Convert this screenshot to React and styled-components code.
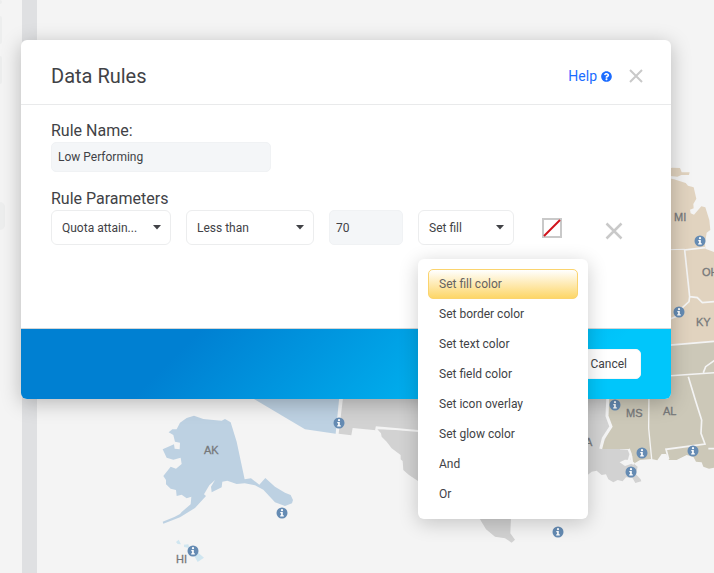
import React, { useState } from "react";
import styled, { createGlobalStyle, css } from "styled-components";

const GlobalStyle = createGlobalStyle`
  *, *::before, *::after { box-sizing: border-box; }
  html, body, #root { height: 100%; }
  body {
    margin: 0;
    overflow: hidden;
    background: #f4f4f4;
    color: #414246;
    font-family: Roboto, "Noto Sans", sans-serif;
    font-size: 12px;
  }
  button, input, select { font: inherit; color: inherit; }
`;

const Page = styled.div`
  position: relative;
  display: flex;
  min-height: 100%;
`;

const Sidebar = styled.aside`
  flex: 0 0 22px;
  display: flex;
  flex-direction: column;
  gap: 12px;
`;

const SideTab = styled.div`
  width: ${(p) => (p.$wide ? 5 : 2)}px;
  height: ${(p) => (p.$short ? 4 : 28)}px;
  margin-top: ${(p) => (p.$wide ? 106 : 0)}px;
  border-radius: 0 5px 5px 0;
  background: #edeeee;
`;

const Splitter = styled.div`
  flex: 0 0 15px;
  background: #dfe0e2;
`;

const Canvas = styled.main`
  flex: 1;
  min-width: 0;
  overflow: hidden;
`;

const MapDrawing = styled.svg`
  display: block;
`;

const StateLabel = styled.text`
  font-family: "Liberation Sans", Arial, sans-serif;
  font-size: 11px;
  fill: #76787a;
  stroke: #76787a;
  stroke-width: 0.3px;
`;

const Overlay = styled.div`
  position: absolute;
  inset: 0;
  padding: 40px 43px 0 21px;
`;

const Dialog = styled.section`
  border-radius: 6px;
  background: #fff;
  box-shadow: 0 4px 20px rgba(0, 0, 0, 0.25);
`;

const Header = styled.header`
  display: flex;
  align-items: center;
  height: 65px;
  padding: 8px 27px 0 30px;
  border-bottom: 1px solid #e9eaeb;
`;

const Title = styled.h1`
  flex: 1;
  margin: 0;
  font-size: 20px;
  font-weight: 400;
  line-height: 28px;
`;

const HelpLink = styled.a`
  display: flex;
  align-items: center;
  gap: 4px;
  margin-right: 16px;
  color: #1b6cff;
  font-size: 14px;
  line-height: 20px;
  text-decoration: none;
`;

const IconButton = styled.button`
  display: flex;
  padding: 0;
  border: 0;
  background: none;
  color: #c9c9c9;
  cursor: pointer;
`;

const Body = styled.div`
  min-height: 224px;
  padding: 15px 30px;
  border-bottom: 1px solid #d3d5d6;
`;

const FieldLabel = styled.label`
  display: block;
  font-size: 16px;
  line-height: 22px;
`;

const Group = styled.fieldset`
  margin: 16px 0 0;
  padding: 0;
  border: 0;
  min-width: 0;
`;

const GroupLabel = styled.legend`
  padding: 0;
  font-size: 16px;
  line-height: 22px;
`;

const TextInput = styled.input`
  display: block;
  width: ${(p) => p.$width}px;
  height: ${(p) => (p.$tall ? 35 : 30)}px;
  padding: 0 6px;
  border: 1px solid #f0f2f4;
  border-radius: 5px;
  background: #f4f6f8;
  outline: none;
`;

const ParamRow = styled.div`
  display: flex;
  align-items: center;
  gap: 15px;
`;

const SelectBox = styled.div`
  position: relative;
  display: grid;
  width: ${(p) => p.$width}px;
`;

const control = css`
  grid-area: 1 / 1;
  width: 100%;
  height: 35px;
  padding: 0 24px 0 10px;
  border: 1px solid #ecedee;
  border-radius: 6px;
  background: #fff;
  text-align: left;
  appearance: none;
  outline: none;
`;

const Select = styled.select`
  ${control}
`;

const SelectTrigger = styled.button`
  ${control}
`;

const Caret = styled.svg`
  grid-area: 1 / 1;
  justify-self: end;
  align-self: center;
  z-index: 1;
  margin-right: 10px;
  pointer-events: none;
`;

const Menu = styled.ul`
  position: absolute;
  top: calc(100% + 14px);
  left: 0;
  z-index: 2;
  width: 170px;
  margin: 0;
  padding: 10px;
  border-radius: 6px;
  background: #fff;
  box-shadow: 0 4px 20px rgba(0, 0, 0, 0.2);
  list-style: none;
`;

const MenuItem = styled.button`
  display: block;
  width: 100%;
  height: 30px;
  padding: 0 10px;
  border: 1px solid ${(p) => (p.$active ? "#fbd46e" : "transparent")};
  border-radius: 5px;
  background: ${(p) => (p.$active ? "linear-gradient(#fff, #fdd667)" : "none")};
  color: ${(p) => (p.$active ? "#666361" : "inherit")};
  text-align: left;
  white-space: nowrap;
`;

const Swatch = styled(IconButton)`
  margin-left: 13px;
`;

const RemoveButton = styled(IconButton)`
  margin: 6px 0 0 27px;
`;

const Footer = styled.footer`
  display: flex;
  justify-content: flex-end;
  padding: 20px 30px;
  border-radius: 0 0 6px 6px;
  background: linear-gradient(135deg, #0080d2 0%, #0080d2 25%, #00c6fb 85%);
`;

const CancelButton = styled.button`
  height: 30px;
  padding: 0 13px;
  border: 1px solid #f5f6f7;
  border-radius: 5px;
  background: #fff;
`;

const actions = [
  "Set fill color",
  "Set border color",
  "Set text color",
  "Set field color",
  "Set icon overlay",
  "Set glow color",
  "And",
  "Or",
];

const labels = [
  ["AK", 204, 454],
  ["HI", 176, 563],
  ["MS", 626, 417],
  ["AL", 663, 415],
  ["LA", 579, 446],
  ["MI", 674, 221],
  ["OH", 702, 276],
  ["KY", 696, 326],
];

const infoPoints = [
  [282, 513], [193, 551], [339, 423], [558, 532], [615, 405],
  [642, 453], [631, 472], [693, 451], [679, 312], [700, 241],
];

function Info({ x, y }) {
  return (
    <g transform={`translate(${x} ${y})`}>
      <circle r="5.5" fill="#658bb3" />
      <circle cy="-2.8" r="1.1" fill="#fff" />
      <path d="M-1.7-1H.8V2.3H1.8V3.5H-1.8V2.3H-.9V.2H-1.7Z" fill="#fff" />
    </g>
  );
}

function StateMap() {
  return (
    <MapDrawing width="677" height="573" viewBox="37 0 677 573" role="img" aria-label="Map of states">
      <g transform="translate(140 390) scale(.3333)">
        <path fill="#bdd1e2" d="M162 77L190 87 220 90 245 92 255 87 272 97 290 155 314 268 333 265 358 284 376 264 405 290 435 308 452 315 459 330 456 340 435 348 405 337 370 299 345 286 314 280 290 282 262 272 247 275 245 292 215 307 213 290 225 270 208 286 192 313 198 318 165 354 120 382 70 401 68 395 103 381 120 372 125 366 152 343 154 320 140 325 125 314 110 318 108 300 92 296 78 283 78 270 70 258 92 230 108 236 125 222 122 203 100 209 80 203 68 178 102 163 104 176 119 178 120 158 105 155 100 135 86 127 97 118 110 118 120 98 140 84Z" />
        <path fill="#d0e6f0" d="M108 456L116 449 123 463 113 462ZM132 464L145 463 148 474 132 471ZM146 474L159 471 163 480 151 483ZM173 487L192 503 173 516 164 500Z" />
      </g>
      <g transform="translate(240 390) scale(.3333)">
        <path fill="#bdd1e2" d="M0 0L42 27 195 118 287 131 300 0Z" />
        <path fill="#d2d2d2" d="M312 0L296 131 334 136 338 114 408 121 410 112 534 122V0Z" />
        <path fill="#d2d2d2" d="M412 118L720 128V290H560L534 273 507 255 490 240 488 213 482 208 482 195 455 175 440 155 425 140 423 130Z" />
        <path fill="none" stroke="#f4f4f4" strokeWidth="6" d="M408 122L410 112 534 123 620 125" />
      </g>
      <g transform="translate(400 390) scale(.3333)">
        <path fill="#d2d2d2" d="M200 340L240 388 258 418 285 440 315 445 335 458 345 449 331 430 335 340Z" />
        <path fill="#d2d2d2" d="M500 0H660V178L690 180 692 210 675 209 659 217 675 228 700 220 713 230 708 253 722 268 724 274 706 279 697 263 678 262 668 274 653 270 640 277 625 268 618 253 605 255 590 242 575 245 562 256H500Z" />
      </g>
      <g transform="translate(560 310) scale(.3333)" stroke="#f4f4f4">
        <path fill="#ccc8b8" strokeWidth="0" d="M144 240H480V470L447 476 430 470 425 457 408 455 400 440 380 435 350 450 327 450 319 432 305 432 292 451 275 447 240 450 220 462 217 438 205 417H122L153 350 141 318Z" />
        <path fill="#ccc8b8" strokeWidth="0" d="M250 100L480 84V260H250Z" />
        <path fill="none" strokeWidth="9" d="M144 250L141 318 153 350 130 385 122 417" />
        <path fill="none" strokeWidth="7" d="M206 417L212 432 207 450 222 462" />
        <path fill="none" strokeWidth="4" d="M267 240L266 355 275 447" />
        <path fill="none" strokeWidth="5" d="M320 198L480 187M385 200L406 270 425 330 423 370 435 402 318 418 326 448M430 188L437 170 465 150M445 416H480" />
      </g>
      <g transform="translate(654 150) scale(.3333)" stroke="#f4f4f4">
        <path fill="#e1d3bf" strokeWidth="0" d="M20 60L55 53 78 54 83 67 107 67 105 75 82 75 70 80 50 78 20 82Z" />
        <path fill="#e1d3bf" strokeWidth="0" d="M20 80L60 88 95 99 102 107 119 112 127 146 118 162 119 175 108 179 110 190 120 194 142 169 154 172 166 210 169 240 158 248 153 280 154 296 180 306V574L0 588V80Z" />
        <path fill="none" strokeWidth="3" d="M0 300L92 298" />
        <path fill="none" strokeWidth="5" d="M153 293L92 300 107 440 105 455 84 474 70 498 50 506M107 440L130 443 145 458 180 455M30 587L180 574" />
      </g>
      {infoPoints.map(([x, y]) => <Info key={`${x}-${y}`} x={x} y={y} />)}
      {labels.map(([name, x, y]) => <StateLabel key={name} x={x} y={y}>{name}</StateLabel>)}
    </MapDrawing>
  );
}

function CloseIcon({ size }) {
  return (
    <svg width={size} height={size} viewBox="0 0 16 16" fill="none" stroke="currentColor" strokeWidth="2" aria-hidden="true">
      <path d="M2 2L14 14M14 2L2 14" />
    </svg>
  );
}

function CaretIcon() {
  return (
    <Caret width="8" height="5" viewBox="0 0 8 5" aria-hidden="true">
      <path d="M0 0H8L4 4.5Z" fill="#414246" />
    </Caret>
  );
}

export default function App() {
  const [selected, setSelected] = useState(actions[0]);
  const [open, setOpen] = useState(true);

  return (
    <Page>
      <GlobalStyle />
      <Sidebar>
        <SideTab $short />
        <SideTab />
        <SideTab />
        <SideTab $wide />
      </Sidebar>
      <Splitter />
      <Canvas><StateMap /></Canvas>
      <Overlay>
        <Dialog role="dialog" aria-labelledby="dialog-title">
          <Header>
            <Title id="dialog-title">Data Rules</Title>
            <HelpLink href="#help">
              Help
              <svg width="11" height="11" viewBox="0 0 512 512" fill="currentColor" aria-hidden="true">
                <path d="M504 256c0 137-111 248-248 248S8 393 8 256 119 8 256 8s248 111 248 248zM262.700 90c-54.500 0-89.300 23-116.500 63.800-3.500 5.300-2.400 12.400 2.700 16.300l34.700 26.300c5.200 3.900 12.600 3 16.700-2.100 17.900-22.700 30.100-35.800 57.300-35.800 20.400 0 45.700 13.100 45.700 33 0 15-12.400 22.700-32.500 34C247.100 238.500 216 254.900 216 296v4c0 6.600 5.400 12 12 12h56c6.600 0 12-5.400 12-12v-1.300c0-28.500 83.200-29.600 83.200-106.700 0-58-60.200-102-116.500-102zM256 338c-25.400 0-46 20.600-46 46s20.600 46 46 46 46-20.600 46-46-20.600-46-46-46z" />
              </svg>
            </HelpLink>
            <IconButton type="button" aria-label="Close"><CloseIcon size={16} /></IconButton>
          </Header>
          <Body>
            <FieldLabel htmlFor="rule-name">Rule Name:</FieldLabel>
            <TextInput id="rule-name" $width={220} defaultValue="Low Performing" />
            <Group>
              <GroupLabel>Rule Parameters</GroupLabel>
              <ParamRow>
                <SelectBox $width={120}>
                  <Select aria-label="Field"><option>Quota attain...</option></Select>
                  <CaretIcon />
                </SelectBox>
                <SelectBox $width={128}>
                  <Select aria-label="Comparison"><option>Less than</option></Select>
                  <CaretIcon />
                </SelectBox>
                <TextInput aria-label="Value" $width={74} $tall defaultValue="70" />
                <SelectBox $width={96}>
                  <SelectTrigger type="button" aria-haspopup="true" aria-expanded={open} onClick={() => setOpen(!open)}>
                    Set fill
                  </SelectTrigger>
                  <CaretIcon />
                  {open && (
                    <Menu aria-label="Action">
                      {actions.map((action) => (
                        <li key={action}>
                          <MenuItem type="button" $active={action === selected} onClick={() => setSelected(action)}>
                            {action}
                          </MenuItem>
                        </li>
                      ))}
                    </Menu>
                  )}
                </SelectBox>
                <Swatch type="button" aria-label="Fill color: none">
                  <svg width="20" height="20" viewBox="0 0 20 20" aria-hidden="true">
                    <rect x="1" y="1" width="18" height="18" fill="#fff" stroke="#c9c9c9" strokeWidth="2" />
                    <path d="M2 18L18 2" stroke="#d0121b" strokeWidth="2" />
                  </svg>
                </Swatch>
                <RemoveButton type="button" aria-label="Remove parameter"><CloseIcon size={20} /></RemoveButton>
              </ParamRow>
            </Group>
          </Body>
          <Footer>
            <CancelButton type="button">Cancel</CancelButton>
          </Footer>
        </Dialog>
      </Overlay>
    </Page>
  );
}
